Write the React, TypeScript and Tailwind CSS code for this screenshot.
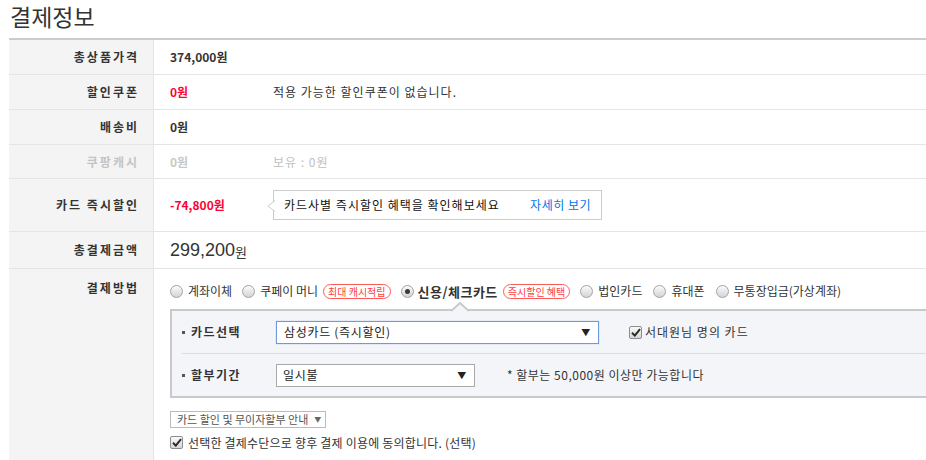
import React from "react";

function Radio({ checked = false }: { checked?: boolean }) {
  return (
    <span className="w-[13px] h-[13px] rounded-full border border-[#a3a3a3] bg-linear-to-b from-[#fbfbfb] to-[#d4d4d4] flex items-center justify-center shrink-0">
      {checked && <span className="w-[5px] h-[5px] rounded-full bg-[#3a3a3a]" />}
    </span>
  );
}

function Check() {
  return (
    <span className="w-[13px] h-[13px] rounded-[2px] border border-[#8d8d8d] bg-linear-to-b from-[#fafafa] to-[#d6d6d6] flex items-center justify-center shrink-0">
      <svg width="10" height="9" viewBox="0 0 10 9">
        <path d="M1 4.8 L3.8 7.6 L9 1.2" fill="none" stroke="#2a2a2a" strokeWidth="2" />
      </svg>
    </span>
  );
}

function Badge({ children }: { children: React.ReactNode }) {
  return (
    <span className="ml-[5px] h-[15px] px-[4px] rounded-full border border-[#ff5a5a] text-[#ff3b3b] text-[10px] leading-[13px] flex items-center whitespace-nowrap tracking-[0px]">
      {children}
    </span>
  );
}

function Row({
  h,
  label,
  labelClass = "text-[#333]",
  children,
}: {
  h: string;
  label: string;
  labelClass?: string;
  children?: React.ReactNode;
}) {
  return (
    <div className={`flex border-b border-[#e5e5e5] ${h}`}>
      <div className={`w-[145px] shrink-0 bg-[#f4f4f4] border-r border-[#e4e4e4] flex items-center justify-end pr-[14px] text-[12px] font-bold tracking-[2px] ${labelClass}`}>
        {label}
      </div>
      <div className="flex-1 flex items-center pl-[16px] text-[12px]">{children}</div>
    </div>
  );
}

export default function App() {
  return (
    <div className="w-[926px] h-[460px] overflow-hidden bg-white text-[#333] font-['Noto_Sans_CJK_KR','Noto_Sans',sans-serif] leading-none">
      <div className="h-[38px] pt-[5px] pl-[10px] text-[23px] leading-none text-[#333]">결제정보</div>
      <div className="ml-[9px] w-[940px] border-t-2 border-[#cccccc]">
        <Row h="h-[35px]" label="총상품가격">
          <span className="font-bold text-[#333]">374,000원</span>
        </Row>
        <Row h="h-[35px]" label="할인쿠폰">
          <span className="w-[103px] font-bold text-[#ff0033]">0원</span>
          <span className="text-[#333] tracking-[1px]">적용 가능한 할인쿠폰이 없습니다.</span>
        </Row>
        <Row h="h-[35px]" label="배송비">
          <span className="font-bold text-[#333]">0원</span>
        </Row>
        <Row h="h-[34px]" label="쿠팡캐시" labelClass="text-[#c4c4c4]">
          <span className="w-[103px] font-bold text-[#c8c8c8]">0원</span>
          <span className="text-[#c0c0c0] tracking-[1px]">보유 : 0원</span>
        </Row>
        <Row h="h-[53px]" label="카드 즉시할인">
          <span className="w-[103px] font-bold text-[#ff0033]">-74,800원</span>
          <div className="relative h-[30px] w-[329px] border border-[#cccccc] bg-white flex items-center pl-[10px] text-[12px] text-[#111]">
            <svg className="absolute left-[-7px] top-[9px]" width="8" height="12" viewBox="0 0 8 12">
              <path d="M8 0.5 L1 6 L8 11.5" fill="#fff" stroke="#cccccc" strokeWidth="1" />
            </svg>
            <span className="tracking-[1px]">카드사별 즉시할인 혜택을 확인해보세요</span>
            <span className="ml-auto mr-[10px] text-[#0074e8] tracking-[0.5px]">자세히 보기</span>
          </div>
        </Row>
        <Row h="h-[37px]" label="총결제금액">
          <span className="text-[18px] font-['Liberation_Sans',sans-serif] text-[#333] tracking-normal">299,200</span>
          <span className="text-[13px] text-[#333] mt-[2px]">원</span>
        </Row>
        <div className="flex h-[200px]">
          <div className="w-[145px] shrink-0 bg-[#f4f4f4] border-r border-[#e4e4e4] flex justify-end pr-[14px] pt-[13px] text-[12px] font-bold tracking-[2px] text-[#333]">
            결제방법
          </div>
          <div className="flex-1 pl-[16px] pt-[14px]">
            <div className="flex items-center h-[16px] text-[12px] text-[#333] whitespace-nowrap">
              <Radio />
              <span className="ml-[5px]">계좌이체</span>
              <span className="ml-[10px]"><Radio /></span>
              <span className="ml-[5px]">쿠페이 머니</span>
              <Badge>최대 캐시적립</Badge>
              <span className="ml-[10px]"><Radio checked /></span>
              <span className="ml-[4px] text-[13px] font-bold tracking-[0.5px]">신용/체크카드</span>
              <Badge>즉시할인 혜택</Badge>
              <span className="ml-[10px]"><Radio /></span>
              <span className="ml-[5px]">법인카드</span>
              <span className="ml-[11px]"><Radio /></span>
              <span className="ml-[5px]">휴대폰</span>
              <span className="ml-[11px]"><Radio /></span>
              <span className="ml-[5px]">무통장입금(가상계좌)</span>
            </div>
            <div className="relative mt-[10px] w-[780px] border-2 border-[#c9c9cc] bg-[#f4f5f9] pl-[10px]">
              <svg className="absolute left-[279px] top-[-9px]" width="18" height="10" viewBox="0 0 18 10">
                <path d="M0 9 L9 1 L18 9" fill="#f4f5f9" stroke="#c9c9cc" strokeWidth="2" />
                <rect x="2" y="9" width="14" height="2" fill="#f4f5f9" />
              </svg>
              <div className="flex items-center h-[43px] border-b border-[#dcdde2]">
                <div className="w-[94px] flex items-center text-[12px] font-bold text-[#333] tracking-[1.5px]">
                  <span className="w-[3px] h-[3px] bg-[#555] mr-[6px]" />
                  카드선택
                </div>
                <div className="relative w-[323px] h-[23px] border border-[#6f9ae0] bg-white flex items-center pl-[7px] text-[12px] text-[#222] tracking-[0.7px] shadow-[0_0_1px_#8fb3ec]">
                  삼성카드 (즉시할인)
                  <span className="absolute right-[7px] top-[6px] text-[9px] text-[#222]">▼</span>
                </div>
                <span className="ml-[30px]"><Check /></span>
                <span className="ml-[3px] text-[12px] text-[#333] tracking-[1px]">서대원님 명의 카드</span>
              </div>
              <div className="flex items-center h-[42px]">
                <div className="w-[94px] flex items-center text-[12px] font-bold text-[#333] tracking-[1.5px]">
                  <span className="w-[3px] h-[3px] bg-[#555] mr-[6px]" />
                  할부기간
                </div>
                <div className="relative w-[199px] h-[23px] border border-[#a9a9a9] bg-white flex items-center pl-[6px] text-[12px] text-[#222] tracking-[0.7px]">
                  일시불
                  <span className="absolute right-[7px] top-[6px] text-[9px] text-[#222]">▼</span>
                </div>
                <span className="ml-[32px] text-[12px] text-[#333] tracking-[0.5px]">* 할부는 50,000원 이상만 가능합니다</span>
              </div>
            </div>
            <div className="mt-[13px] w-[156px] h-[17px] border border-[#bbbbbb] bg-white flex items-center pl-[6px] text-[11px] text-[#555] whitespace-nowrap">
              카드 할인 및 무이자할부 안내
              <span className="ml-[6px] text-[7px] text-[#666]">▼</span>
            </div>
            <div className="mt-[8px] flex items-center text-[12px] text-[#333]">
              <Check />
              <span className="ml-[5px] tracking-[0.2px]">선택한 결제수단으로 향후 결제 이용에 동의합니다. (선택)</span>
            </div>
          </div>
        </div>
      </div>
    </div>
  );
}
